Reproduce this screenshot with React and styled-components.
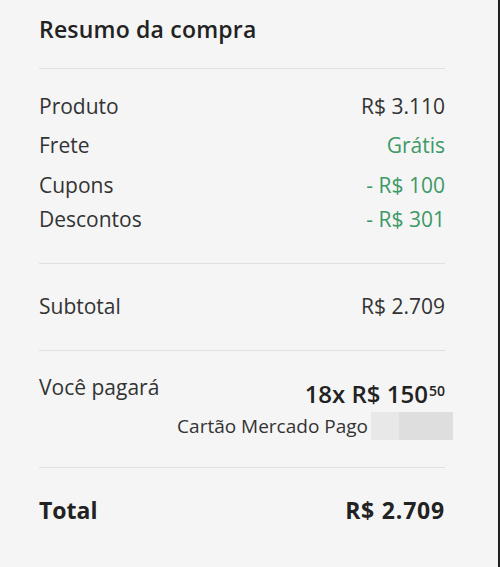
import React from 'react';
import styled, { createGlobalStyle } from 'styled-components';

const GlobalStyle = createGlobalStyle`
  html, body {
    margin: 0;
    padding: 0;
    background: #f5f5f5;
  }
  * {
    box-sizing: border-box;
  }
`;

const Panel = styled.aside`
  min-height: 567px;
  width: 500px;
  background: #f5f5f5;
  border-right: 2px solid #1f1f1f;
  padding: 16px 53px 0 39px;
  font-family: 'Open Sans', Lato, sans-serif;
  color: #333;
`;

const Title = styled.h2`
  margin: 0;
  font-size: 23px;
  line-height: 27px;
  font-weight: 600;
  letter-spacing: 0.2px;
  color: #222;
`;

const Divider = styled.hr`
  border: none;
  height: 1px;
  background: #e0e0e0;
  margin: ${({ $top }) => $top || 0}px 0 0;
`;

const Section = styled.div`
  display: flex;
  flex-direction: column;
  padding-top: ${({ $top }) => $top}px;
  padding-bottom: ${({ $bottom }) => $bottom || 0}px;
`;

const Row = styled.div`
  display: flex;
  justify-content: space-between;
  align-items: ${({ $align }) => $align || 'baseline'};
  font-size: ${({ $strong }) => ($strong ? 23 : 21)}px;
  line-height: ${({ $strong }) => ($strong ? 27 : 24)}px;
  font-weight: ${({ $strong }) => ($strong ? 700 : 400)};
  color: ${({ $strong }) => ($strong ? '#222' : '#333')};
  margin-top: ${({ $gap }) => $gap || 0}px;
`;

const Value = styled.span`
  color: ${({ $green }) => ($green ? '#3d9965' : 'inherit')};
  letter-spacing: ${({ $wide }) => ($wide ? '0.8px' : 'normal')};
`;

const PayBox = styled.div`
  display: flex;
  flex-direction: column;
  align-items: flex-end;
  margin-top: 5px;
`;

const Installments = styled.div`
  font-size: 24px;
  line-height: 28px;
  font-weight: 600;
  color: #222;
  display: flex;
  align-items: flex-start;
`;

const Cents = styled.sup`
  font-size: 14px;
  line-height: 14px;
  font-weight: 600;
  margin-left: 1px;
  margin-top: 4px;
  vertical-align: baseline;
`;

const CardLine = styled.div`
  display: flex;
  align-items: center;
  margin-top: 4px;
  margin-right: -8px;
  font-size: 19px;
  line-height: 22px;
  color: #333;
`;

const CardLogo = styled.div`
  width: 82px;
  height: 28px;
  margin-left: 3px;
  display: flex;
  span:first-child {
    width: 28px;
    background: #e8e8e8;
  }
  span:last-child {
    flex: 1;
    background: #dedede;
  }
`;

export default function App() {
  return (
    <>
      <GlobalStyle />
      <Panel>
        <Title>Resumo da compra</Title>
        <Divider $top={25} />

        <Section $top={25} $bottom={32}>
          <Row>
            <span>Produto</span>
            <Value>R$ 3.110</Value>
          </Row>
          <Row $gap={15}>
            <span>Frete</span>
            <Value $green>Grátis</Value>
          </Row>
          <Row $gap={16}>
            <span>Cupons</span>
            <Value $green>- R$ 100</Value>
          </Row>
          <Row $gap={10}>
            <span>Descontos</span>
            <Value $green>- R$ 301</Value>
          </Row>
        </Section>
        <Divider />

        <Section $top={30} $bottom={32}>
          <Row>
            <span>Subtotal</span>
            <Value>R$ 2.709</Value>
          </Row>
        </Section>
        <Divider />

        <Section $top={24} $bottom={27}>
          <Row $align="flex-start">
            <span>Você pagará</span>
            <PayBox>
              <Installments>
                18x R$ 150<Cents>50</Cents>
              </Installments>
              <CardLine>
                Cartão Mercado Pago
                <CardLogo>
                  <span />
                  <span />
                </CardLogo>
              </CardLine>
            </PayBox>
          </Row>
        </Section>
        <Divider />

        <Section $top={29}>
          <Row $strong>
            <span>Total</span>
            <Value $wide>R$ 2.709</Value>
          </Row>
        </Section>
      </Panel>
    </>
  );
}
